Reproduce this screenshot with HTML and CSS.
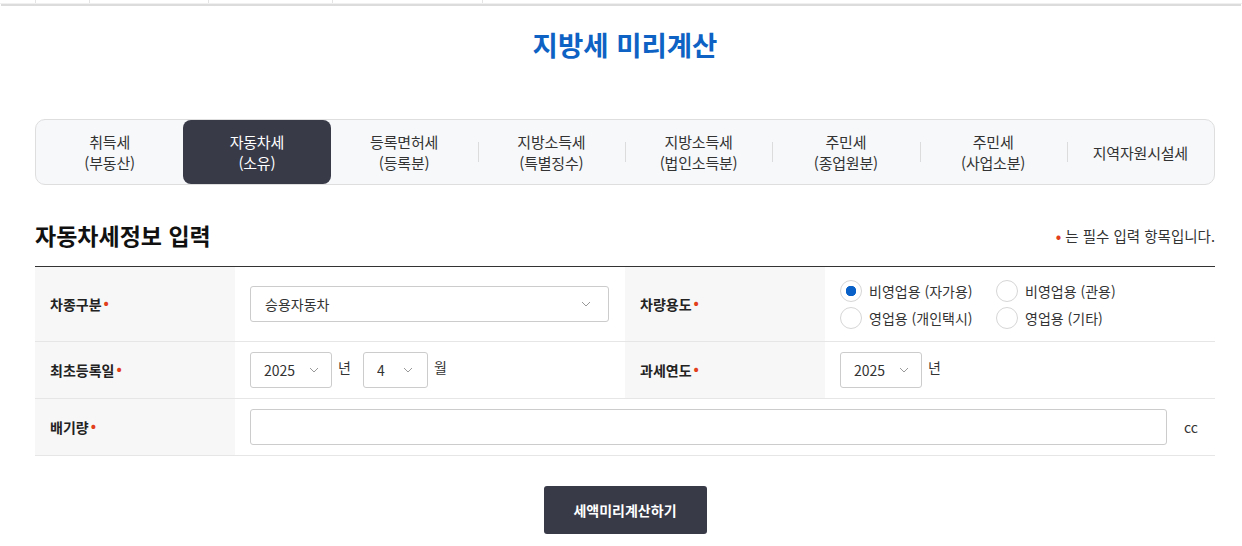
FILE: index.html
```html
<!DOCTYPE html>
<html lang="ko">
<head>
    <meta charset="UTF-8">
    <meta name="viewport" content="width=device-width, initial-scale=1.0">
    <title>지방세 미리계산</title>
    <link rel="stylesheet" href="styles.css">
</head>
<body>
    <div class="prev-strip">
        <span class="cell c1"></span>
        <span class="cell c2"></span>
        <span class="cell c3"></span>
        <span class="cell c4"></span>
        <span class="cell c5"></span>
    </div>
    <main class="wrap">
        <h1 class="page-title">지방세 미리계산</h1>

        <ul class="tax-tabs">
            <li class="tab">취득세<br>(부동산)</li>
            <li class="tab active">자동차세<br>(소유)</li>
            <li class="tab">등록면허세<br>(등록분)</li>
            <li class="tab sep">지방소득세<br>(특별징수)</li>
            <li class="tab sep">지방소득세<br>(법인소득분)</li>
            <li class="tab sep">주민세<br>(종업원분)</li>
            <li class="tab sep">주민세<br>(사업소분)</li>
            <li class="tab sep">지역자원시설세</li>
        </ul>

        <div class="sec-head">
            <h2>자동차세정보 입력</h2>
            <p class="req-note"><span class="req">•</span> 는 필수 입력 항목입니다.</p>
        </div>

        <table class="form-table">
            <colgroup>
                <col class="col-th">
                <col class="col-td">
                <col class="col-th">
                <col>
            </colgroup>
            <tr class="row-tall">
                <th>차종구분<span class="req">•</span></th>
                <td>
                    <select class="sel sel-full">
                        <option>승용자동차</option>
                    </select>
                </td>
                <th>차량용도<span class="req">•</span></th>
                <td>
                    <div class="radio-grid">
                        <label class="radio"><input type="radio" name="use" checked><span>비영업용 (자가용)</span></label>
                        <label class="radio"><input type="radio" name="use"><span>비영업용 (관용)</span></label>
                        <label class="radio"><input type="radio" name="use"><span>영업용 (개인택시)</span></label>
                        <label class="radio"><input type="radio" name="use"><span>영업용 (기타)</span></label>
                    </div>
                </td>
            </tr>
            <tr>
                <th>최초등록일<span class="req">•</span></th>
                <td>
                    <div class="inline">
                        <select class="sel sel-year"><option>2025</option></select>
                        <span class="unit">년</span>
                        <select class="sel sel-month"><option>4</option></select>
                        <span class="unit">월</span>
                    </div>
                </td>
                <th>과세연도<span class="req">•</span></th>
                <td>
                    <div class="inline">
                        <select class="sel sel-year"><option>2025</option></select>
                        <span class="unit">년</span>
                    </div>
                </td>
            </tr>
            <tr>
                <th>배기량<span class="req">•</span></th>
                <td colspan="3">
                    <div class="inline">
                        <input class="txt" type="text">
                        <span class="cc">cc</span>
                    </div>
                </td>
            </tr>
        </table>

        <div class="btn-area">
            <button type="button" class="btn-calc">세액미리계산하기</button>
        </div>
    </main>
</body>
</html>
```

FILE: styles.css
```css
body {
  margin: 0;
  font-family: "Noto Sans CJK KR", "Noto Sans", sans-serif;
  color: #222;
  background: #fff;
}
.prev-strip {
  display: flex;
  height: 3px;
  border-bottom: 1px solid #f0f0f0;
  margin-bottom: 2px;
  box-shadow: 0 3px 0 -1px #dcdcdc;
}
.prev-strip .cell {
  height: 3px;
  border-right: 1px solid #e4e4e4;
}
.prev-strip .c1 { width: 35px; }
.prev-strip .c2 { width: 53px; }
.prev-strip .c3 { width: 118px; }
.prev-strip .c4 { width: 123px; }
.prev-strip .c5 { width: 149px; }
.wrap {
  width: 1180px;
  margin: 0 0 0 35px;
}
.page-title {
  margin: 22px 0 0;
  font-size: 27.5px;
  line-height: 36px;
  font-weight: 700;
  color: #0d62c4;
  text-align: center;
}
.tax-tabs {
  display: flex;
  margin: 57px 0 0;
  padding: 0;
  list-style: none;
  height: 64px;
  border: 1px solid #dedede;
  border-radius: 10px;
  background: #f7f8fa;
}
.tab {
  position: relative;
  flex: 1;
  display: flex;
  align-items: center;
  justify-content: center;
  text-align: center;
  font-size: 15px;
  line-height: 21px;
  color: #333;
  letter-spacing: -0.2px;
}
.tab.sep::before {
  content: '';
  position: absolute;
  left: 0;
  top: 22px;
  width: 1px;
  height: 20px;
  background: #dcdcdc;
}
.tab.active {
  background: #383a48;
  color: #fff;
  border-radius: 8px;
}
.sec-head {
  display: flex;
  align-items: center;
  justify-content: space-between;
  margin-top: 35px;
}
.sec-head h2 {
  margin: 0;
  font-size: 23px;
  line-height: 30px;
  font-weight: 700;
  color: #111;
}
.req-note {
  margin: 0;
  font-size: 14.5px;
  color: #333;
}
.req {
  color: #e2401c;
  font-weight: 700;
}
.form-table {
  width: 100%;
  margin-top: 16px;
  border-collapse: collapse;
  border-top: 1px solid #333;
  table-layout: fixed;
}
.col-th { width: 200px; }
.col-td { width: 390px; }
.form-table th,
.form-table td {
  height: 36px;
  padding: 10px 15px;
  border-bottom: 1px solid #e6e6e6;
  vertical-align: middle;
}
.form-table th {
  background: #f7f7f7;
  text-align: left;
  font-size: 14px;
  font-weight: 700;
  color: #222;
}
.form-table th .req {
  margin-left: 2px;
  position: relative;
  top: -2px;
}
.form-table tr.row-tall th,
.form-table tr.row-tall td {
  height: 54px;
}
.sel {
  height: 36px;
  padding: 0 28px 0 13px;
  border: 1px solid #ccc;
  border-radius: 3px;
  background: #fff url("data:image/svg+xml,%3Csvg xmlns='http://www.w3.org/2000/svg' width='10' height='6' viewBox='0 0 10 6'%3E%3Cpath d='M1 1l4 4 4-4' fill='none' stroke='%23999' stroke-width='1'/%3E%3C/svg%3E") no-repeat right 12px center;
  -webkit-appearance: none;
  appearance: none;
  font-family: inherit;
  font-size: 14px;
  color: #333;
}
.sel-full { width: 359px; padding-left: 14px; background-position: right 17px center; }
.sel-year { width: 82px; }
.sel-month { width: 65px; background-position: right 14px center; }
.inline {
  display: flex;
  align-items: flex-start;
}
.unit {
  margin: 5px 0 0 6px;
  font-size: 14px;
  line-height: 20px;
  color: #333;
}
.unit + .sel {
  margin-left: 12px;
}
.radio-grid {
  display: grid;
  grid-template-columns: 156px auto;
  row-gap: 5px;
}
.radio {
  display: flex;
  align-items: center;
  font-size: 14px;
  color: #333;
}
.radio input {
  -webkit-appearance: none;
  appearance: none;
  width: 22px;
  height: 22px;
  margin: 0 7px 0 0;
  border: 1px solid #d6d6d6;
  border-radius: 50%;
  background: #fff;
}
.radio input:checked {
  background: radial-gradient(circle, #0a62c8 0 5px, #fff 5.5px);
}
.txt {
  flex: 1;
  height: 36px;
  box-sizing: border-box;
  border: 1px solid #ccc;
  border-radius: 3px;
  font-family: inherit;
  font-size: 14px;
}
.cc {
  margin: 8px 0 0 17px;
  width: 16px;
  font-size: 14px;
  line-height: 20px;
  color: #333;
}
.btn-area {
  margin-top: 30px;
  text-align: center;
}
.btn-calc {
  width: 163px;
  height: 48px;
  border: 0;
  border-radius: 3px;
  background: #383a48;
  color: #fff;
  font-family: inherit;
  font-size: 14px;
  font-weight: 700;
}
```
